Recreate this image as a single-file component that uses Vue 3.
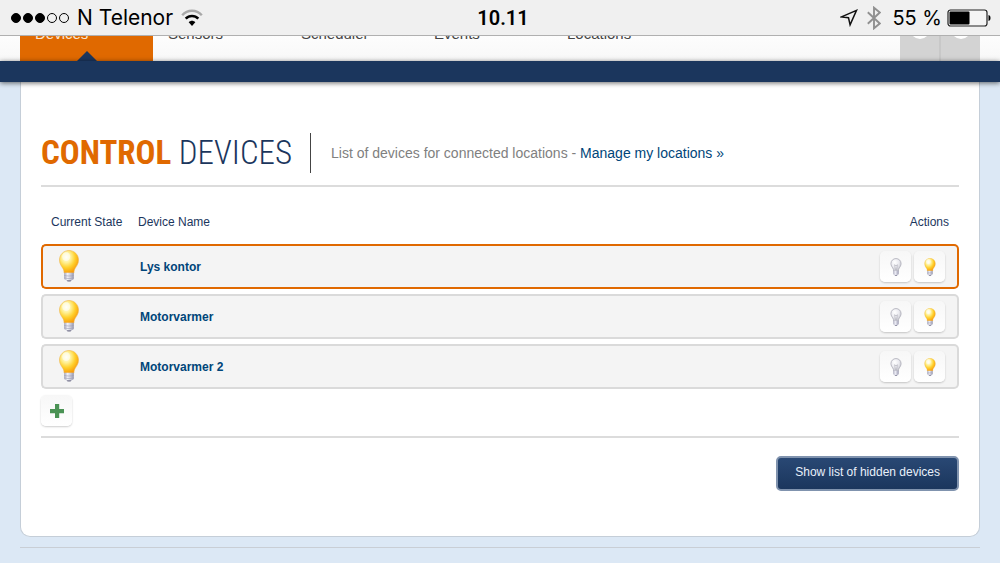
<script setup>
import { ref } from 'vue'

const navItems = ['Devices', 'Sensors', 'Scheduler', 'Events', 'Locations']
const signal = [true, true, true, false, false]
const devices = ref([
  { id: 1, name: 'Lys kontor', selected: true },
  { id: 2, name: 'Motorvarmer', selected: false },
  { id: 3, name: 'Motorvarmer 2', selected: false }
])

function select(device) {
  devices.value.forEach((d) => { d.selected = d.id === device.id })
}
</script>

<template>
  <div class="screen">
    <svg class="defs" width="0" height="0" aria-hidden="true">
      <defs>
        <radialGradient id="glassOn" cx="0.36" cy="0.3" r="0.75">
          <stop offset="0" stop-color="#fffef0" />
          <stop offset="0.3" stop-color="#fff3a0" />
          <stop offset="0.62" stop-color="#ffd02c" />
          <stop offset="1" stop-color="#f89406" />
        </radialGradient>
        <radialGradient id="glassOff" cx="0.38" cy="0.3" r="0.75">
          <stop offset="0" stop-color="#ffffff" />
          <stop offset="0.5" stop-color="#ececf1" />
          <stop offset="1" stop-color="#c4c4cc" />
        </radialGradient>
        <linearGradient id="screw" x1="0" x2="1" y1="0" y2="0">
          <stop offset="0" stop-color="#a4a4b8" />
          <stop offset="0.35" stop-color="#f0f0f8" />
          <stop offset="0.7" stop-color="#c4c4d4" />
          <stop offset="1" stop-color="#9696ac" />
        </linearGradient>
        <symbol id="bulbOn" viewBox="0 0 20 32">
          <path d="M10 .5C4.700.5.5 4.700.5 10c0 3.900 2 6.100 3.300 8.200 1 1.600 1.200 3.200 1.300 4.800h9.800c.1-1.600.3-3.200 1.300-4.800 1.300-2.100 3.300-4.300 3.300-8.200C19.500 4.700 15.300.5 10 .5z" fill="url(#glassOn)" stroke="#eeb64c" stroke-width=".6" />
          <path d="M5.200 22.800h9.600v5.400c0 1-.8 1.500-1.700 1.800L11.800 31.300H8.200L6.900 30c-.9-.3-1.700-.8-1.700-1.800z" fill="url(#screw)" />
          <path d="M5.200 25.400c3 .8 6.600.8 9.600 0M5.200 27.900c3 .8 6.600.8 9.600 0" fill="none" stroke="#9c9cb2" stroke-width=".6" />
          <path d="M7.700 30.200h4.600l-.8 1.300H8.500z" fill="#77778e" />
          <ellipse cx="7.200" cy="6.600" rx="4" ry="4.400" fill="#fff" opacity=".55" />
        </symbol>
        <symbol id="bulbOff" viewBox="0 0 20 32">
          <path d="M10 1C5 1 1 4.800 1 9.800c0 3.600 1.900 5.900 3.300 8 1.100 1.700 1.300 3.300 1.500 5.200h8.400c.2-1.900.4-3.500 1.500-5.200 1.400-2.100 3.300-4.400 3.300-8C19 4.800 15 1 10 1z" fill="url(#glassOff)" stroke="#b0b0ba" stroke-width="1.500" />
          <path d="M7.500 12l1.500 10M12.500 12L11 22M7.500 12l2.500 2 2.500-2" fill="none" stroke="#a8a8b2" stroke-width="1" />
          <path d="M5.200 22.800h9.600v5.400c0 1-.8 1.500-1.700 1.800L11.800 31.300H8.200L6.900 30c-.9-.3-1.700-.8-1.700-1.800z" fill="url(#screw)" />
          <path d="M7.700 30.200h4.600l-.8 1.300H8.500z" fill="#77778e" />
        </symbol>
      </defs>
    </svg>

    <div class="status">
      <div class="status-left">
        <span class="dots"><i v-for="(on, i) in signal" :key="i" :class="['dot', { on }]"></i></span>
        <span class="carrier">N Telenor</span>
        <svg class="wifi" width="22" height="18" viewBox="0 0 22 18" aria-hidden="true">
          <path d="M1.200 6.300C6.600.3 15.400.3 20.800 6.300" fill="none" stroke="#a8a8a8" stroke-width="2.400" />
          <path d="M4.700 9.700c3.500-3.700 9.100-3.700 12.600 0" fill="none" stroke="#000" stroke-width="2.600" />
          <path d="M7.700 13.200c1.900-2 4.700-2 6.600 0L11 16.900z" fill="#000" />
        </svg>
      </div>
      <div class="clock">10.11</div>
      <div class="status-right">
        <svg width="18" height="18" viewBox="0 0 18 18" aria-hidden="true">
          <path d="M16.500 1.400L1.500 7.900l7 .9 1.600 7z" fill="none" stroke="#111" stroke-width="1.500" stroke-linejoin="miter" />
        </svg>
        <svg class="bluetooth" width="14" height="24" viewBox="0 0 14 24" aria-hidden="true">
          <path d="M.8 6.300l12 11.200L7 22.300V1.700l5.800 4.800L.8 17.700" fill="none" stroke="#909090" stroke-width="1.900" />
        </svg>
        <span class="percent">55 %</span>
        <svg width="44" height="18" viewBox="0 0 44 18" aria-hidden="true">
          <rect x="1" y="1" width="39" height="16" rx="2.500" fill="#fff" fill-opacity=".35" stroke="#222" stroke-width="1.200" />
          <rect x="2.500" y="2.500" width="20" height="13" rx="1" fill="#000" />
          <path d="M41.500 6c1.500.3 2 1.500 2 3s-.5 2.700-2 3z" fill="#000" />
        </svg>
      </div>
    </div>

    <header class="top">
      <nav class="nav">
        <a v-for="(item, i) in navItems" :key="item" href="#" :class="['nav-item', { active: i === 0 }]">{{ item }}</a>
      </nav>
      <div class="tools">
        <button type="button" class="tool" aria-label="Settings"><span class="knob"></span></button>
        <button type="button" class="tool" aria-label="Account"><span class="knob"></span></button>
      </div>
    </header>
    <div class="band"></div>

    <main class="panel">
      <div class="heading">
        <h1><b>CONTROL</b> DEVICES</h1>
        <p>List of devices for connected locations - <a href="#">Manage my locations »</a></p>
      </div>

      <table class="devices">
        <thead>
          <tr>
            <th class="state">Current State</th>
            <th>Device Name</th>
            <th class="actions">Actions</th>
          </tr>
        </thead>
        <tbody>
          <tr v-for="device in devices" :key="device.id" :class="{ selected: device.selected }" @click="select(device)">
            <td class="state"><svg class="bulb" role="img" aria-label="On"><use href="#bulbOn" /></svg></td>
            <td class="name">{{ device.name }}</td>
            <td class="actions">
              <div class="buttons">
                <button type="button" class="tile" :aria-label="'Turn off ' + device.name"><svg class="mini"><use href="#bulbOff" /></svg></button>
                <button type="button" class="tile" :aria-label="'Turn on ' + device.name"><svg class="mini"><use href="#bulbOn" /></svg></button>
              </div>
            </td>
          </tr>
        </tbody>
      </table>

      <button type="button" class="tile add" aria-label="Add device">
        <svg width="16" height="16" viewBox="0 0 16 16"><path d="M6 1h4.200v5H15v4.200h-4.800V15H6v-4.800H1V6h5z" fill="#4b9355" /></svg>
      </button>

      <div class="footer">
        <button type="button" class="primary">Show list of hidden devices</button>
      </div>
    </main>
    <div class="rule"></div>
  </div>
</template>

<style>
html,
body {
  background: #dce8f5;
}
body {
  margin: 0;
}
</style>

<style scoped>
.screen {
  box-sizing: border-box;
  min-height: 100vh;
  background: #dce8f5;
  font-family: "Liberation Sans", Arial, sans-serif;
  font-size: 12px;
  color: #1b365d;
}
.defs {
  position: absolute;
}
.status {
  box-sizing: border-box;
  height: 36px;
  display: grid;
  grid-template-columns: 1fr auto 1fr;
  align-items: center;
  padding: 0 9px 0 11px;
  background: #f0f0f0;
  border-bottom: 1px solid #b0b0b0;
  color: #000;
  font-family: Inter, Roboto, sans-serif;
  font-size: 20px;
}
.status-left,
.status-right {
  display: flex;
  align-items: center;
}
.status-left {
  gap: 8px;
}
.status-right {
  justify-content: flex-end;
  gap: 5px;
}
.bluetooth {
  margin: 0 6px 0 4px;
}
.carrier {
  font-size: 21px;
}
.dots {
  display: flex;
  gap: 2px;
}
.dot {
  box-sizing: border-box;
  width: 10px;
  height: 10px;
  border: 1px solid #000;
  border-radius: 50%;
}
.dot.on {
  background: #000;
}
.clock {
  padding-left: 4px;
  font-family: Roboto, sans-serif;
  font-weight: 600;
}
.top {
  height: 25px;
  overflow: hidden;
  display: flex;
  align-items: flex-end;
  justify-content: space-between;
  padding: 0 20px;
  background: linear-gradient(#fdfdfd, #f8f8f8);
}
.nav {
  display: flex;
}
.nav-item {
  box-sizing: border-box;
  position: relative;
  width: 133px;
  height: 60px;
  padding: 24px 15px 0;
  line-height: 18px;
  font-size: 15px;
  color: #444;
  text-decoration: none;
}
.nav-item.active {
  background: #e06900;
  color: #fbe6d2;
}
.nav-item.active::after {
  content: "";
  position: absolute;
  left: 57px;
  bottom: 0;
  border: solid transparent;
  border-width: 0 10px 10px;
  border-bottom-color: #1b365d;
}
.tools {
  display: flex;
  gap: 2px;
  background: #c8c8c8;
}
.tool {
  box-sizing: border-box;
  display: flex;
  justify-content: center;
  width: 39px;
  height: 60px;
  padding: 18px 0 0;
  border: 0;
  background: #d3d3d3;
}
.knob {
  width: 20px;
  height: 20px;
  border-radius: 50%;
  background: #fff;
}
.band {
  position: relative;
  height: 21px;
  background: #1b365d;
  box-shadow: 0 1px 5px rgba(0, 0, 0, 0.6);
}
.panel {
  margin: 0 20px;
  padding: 51px 20px 45px;
  background: #fff;
  border: 1px solid #c5ced8;
  border-top: 0;
  border-radius: 0 0 10px 10px;
}
.heading {
  display: flex;
  align-items: center;
  padding-bottom: 12px;
  border-bottom: 2px solid #dcdcdc;
}
h1 {
  margin: 0;
  padding-right: 18px;
  border-right: 1px solid #444;
  font-family: "Roboto Condensed", "Liberation Sans Narrow", Roboto, sans-serif;
  font-size: 33px;
  line-height: 40px;
  font-weight: 300;
  color: #1b365d;
}
h1 b {
  font-weight: 700;
  color: #e06900;
}
.heading p {
  margin: 0;
  padding-left: 20px;
  font-size: 14px;
  color: #808080;
}
.heading a {
  color: #004579;
  text-decoration: none;
}
.devices {
  width: 100%;
  margin-top: 12px;
  border-collapse: separate;
  border-spacing: 0 5px;
}
th {
  height: 35px;
  padding: 0 10px;
  font-weight: 400;
  text-align: left;
  white-space: nowrap;
}
td {
  height: 41px;
  padding: 0 12px;
  background: #f4f4f4;
  border: solid #dadada;
  border-width: 2px 0;
}
.selected td {
  border-color: #e06900;
}
th.state,
td.state {
  box-sizing: border-box;
  width: 87px;
}
th.state {
  padding-right: 4px;
}
td.state {
  padding: 0 16px 2px;
  border-left-width: 2px;
  border-radius: 5px 0 0 5px;
}
th.actions {
  text-align: right;
}
td.actions {
  border-right-width: 2px;
  border-radius: 0 5px 5px 0;
}
.name {
  font-weight: 700;
  color: #004579;
}
.bulb {
  display: block;
  width: 20px;
  height: 32px;
}
.mini {
  width: 12px;
  height: 18px;
}
.buttons {
  display: flex;
  justify-content: flex-end;
  gap: 3px;
}
.tile {
  display: flex;
  align-items: center;
  justify-content: center;
  width: 31px;
  height: 31px;
  padding: 0;
  border: 0;
  border-radius: 5px;
  background: linear-gradient(#f7f7f7, #fff);
  box-shadow: 0 1px 2px rgba(0, 0, 0, 0.2);
}
.add {
  margin-top: 1px;
}
.footer {
  display: flex;
  justify-content: flex-end;
  margin-top: 10px;
  padding-top: 18px;
  border-top: 2px solid #dcdcdc;
}
.primary {
  height: 35px;
  padding: 0 17px 3px;
  border: 2px solid #8093ae;
  border-radius: 5px;
  background: linear-gradient(#294874, #1b365d);
  color: #e8f0fa;
  font: inherit;
}
.rule {
  margin: 10px 20px 0;
  border-top: 1px solid #c9ced5;
}
</style>
